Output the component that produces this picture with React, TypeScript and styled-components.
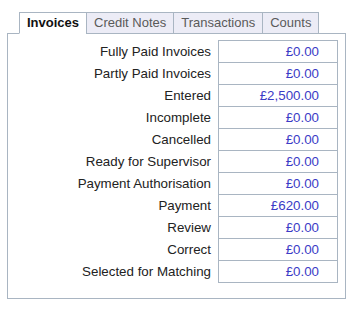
import React from "react";
import styled, { createGlobalStyle } from "styled-components";

const GlobalStyle = createGlobalStyle`
    body {
        margin: 0;
        background: #fff;
        font-family: "Liberation Sans", Arial, sans-serif;
    }
`;

const Wrapper = styled.div`
    padding: 12px 0 0 7px;
    width: 339px;
`;

const TabBar = styled.div`
    display: flex;
    padding-left: 12px;
    position: relative;
    z-index: 1;
`;

const Tab = styled.div<{ $active?: boolean }>`
    height: 20px;
    line-height: 20px;
    padding: 0 7px 0 7px;
    font-size: 13px;
    border: 1px solid #a9b5c2;
    margin-left: -1px;
    background: ${(p) => (p.$active ? "#fff" : "#ececf6")};
    border-bottom-color: ${(p) => (p.$active ? "#fff" : "#a9b5c2")};
    color: ${(p) => (p.$active ? "#111" : "#5a5a5a")};
    font-weight: ${(p) => (p.$active ? 700 : 400)};
    &:first-child {
        margin-left: 0;
    }
`;

const Panel = styled.div`
    margin-top: -1px;
    border: 1px solid #a9b5c2;
    height: 258px;
    box-sizing: content-box;
    padding: 6px 7px 0 0;
`;

const Rows = styled.div`
    display: flex;
    flex-direction: column;
`;

const Row = styled.div`
    display: flex;
    align-items: center;
    justify-content: flex-end;
    margin-top: -1px;
    &:first-child {
        margin-top: 0;
    }
`;

const Label = styled.div`
    font-size: 13.33px;
    color: #222;
    text-align: right;
    padding-right: 7px;
`;

const Value = styled.div`
    width: 120px;
    height: 23px;
    line-height: 21px;
    border: 1px solid #a9b5c2;
    font-size: 13.33px;
    color: #3b3bc6;
    text-align: right;
    padding-right: 18px;
    box-sizing: border-box;
`;

const tabs = ["Invoices", "Credit Notes", "Transactions", "Counts"];

const rows: [string, string][] = [
    ["Fully Paid Invoices", "£0.00"],
    ["Partly Paid Invoices", "£0.00"],
    ["Entered", "£2,500.00"],
    ["Incomplete", "£0.00"],
    ["Cancelled", "£0.00"],
    ["Ready for Supervisor", "£0.00"],
    ["Payment Authorisation", "£0.00"],
    ["Payment", "£620.00"],
    ["Review", "£0.00"],
    ["Correct", "£0.00"],
    ["Selected for Matching", "£0.00"],
];

export default function App() {
    return (
        <>
            <GlobalStyle />
            <Wrapper>
                <TabBar>
                    {tabs.map((t, i) => (
                        <Tab key={t} $active={i === 0}>{t}</Tab>
                    ))}
                </TabBar>
                <Panel>
                    <Rows>
                        {rows.map(([label, value]) => (
                            <Row key={label}>
                                <Label>{label}</Label>
                                <Value>{value}</Value>
                            </Row>
                        ))}
                    </Rows>
                </Panel>
            </Wrapper>
        </>
    );
}
